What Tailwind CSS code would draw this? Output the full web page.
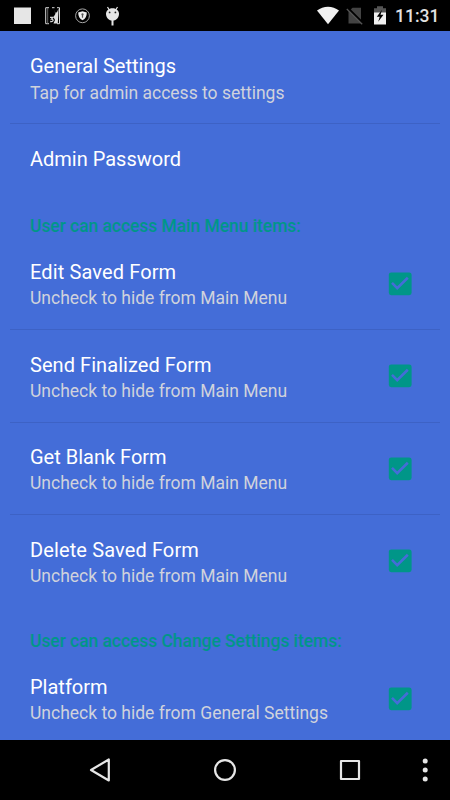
<!DOCTYPE html>
<html lang="en">
<head>
<meta charset="utf-8">
<title>Admin Settings</title>
<script src="https://cdn.jsdelivr.net/npm/@tailwindcss/browser@4"></script>
</head>
<body class="w-[450px] h-[800px] overflow-hidden bg-[#446dd8] font-[Roboto,sans-serif] text-white flex flex-col">
<svg class="hidden">
  <symbol id="check" viewBox="0 0 24 24">
    <rect x="0.8" y="0.4" width="22.8" height="22.8" rx="2.400" fill="#009688"/>
    <path d="M4 10.900L9.200 16.100L19.800 5.700" fill="none" stroke="#446dd8" stroke-width="2.600"/>
  </symbol>
</svg>
<header class="h-[31px] shrink-0 bg-black flex">
  <svg class="w-[390px] h-[31px]" viewBox="0 0 390 31">
    <rect x="14" y="7.500" width="17" height="16.500" fill="#e6e6e6"/>
    <g fill="none" stroke="#d8d8d8">
      <path d="M49 7.700h-3.300v16H49M52 7.700H54.500M57 7.700h2.500v16H57" stroke-width="1"/>
      <path d="M47.700 8v15.500" stroke="#666" stroke-width="1"/>
      <path d="M50 17.300h3L51.500 19.200C54 19.200 53.500 22.300 50.200 21.500" stroke-width="1.300"/>
    </g>
    <path d="M53.700 9L55 12.800L57 12.300L58.600 8.500L57.800 23.500H53.500L55 20L53.500 17L55.500 13.800Z" fill="#e0e0e0"/>
    <circle cx="82.500" cy="15.800" r="6.900" fill="none" stroke="#a5a5a5" stroke-width="1"/>
    <path d="M82.500 11.300L86.800 12.500C86.800 16.200 85.500 18.700 82.500 20.300C79.500 18.700 78.200 16.200 78.200 12.500Z" fill="#eee"/>
    <path d="M82.500 13.200a1.200 1.200 0 0 1 .6 2.200v2.300h-1.200v-2.300a1.200 1.200 0 0 1 .6-2.200" fill="#555"/>
    <path d="M107.500 7L109.300 10M117.500 7L115.700 10" stroke="#e6e6e6" stroke-width="1.200"/>
    <path d="M112.500 20V25.500" stroke="#e6e6e6" stroke-width="2"/>
    <path d="M112.500 8.200C116.500 8.200 119 10.700 119 14C119 17.500 116 20.700 112.500 20.700S106 17.500 106 14C106 10.700 108.500 8.200 112.500 8.200Z" fill="#e6e6e6"/>
    <circle cx="109.600" cy="12.400" r=".9" fill="#222"/><circle cx="115.400" cy="12.400" r=".9" fill="#222"/>
    <path d="M317 10.600C323.300 5.300 332.700 5.300 339 10.600L328 24.200Z" fill="#f0f0f0"/>
    <path d="M348.500 11.500L352.500 7.700H361V23.500H348.500Z" fill="#434343"/>
    <path d="M347.500 8L363 23.500" stroke="#000" stroke-width="2.500"/>
    <path d="M346.800 9L362.200 24.300" stroke="#555" stroke-width="1.300"/>
    <path d="M374 8.200H377V6.300H383V8.200H386V13H374Z" fill="#555"/>
    <path d="M374 12.500H386V24.500H374Z" fill="#f0f0f0"/>
    <path d="M382 9.800L376.800 16.800H379.700L378.200 21.800L383.500 14.800H380.500Z" fill="#000"/>
  </svg>
  <div class="pl-[5px] pt-[1px] text-[17.5px] leading-[31px] font-medium text-[#e2e2e2] whitespace-nowrap">11:31</div>
</header>
<main class="h-[709px] shrink-0 overflow-hidden">
  <section>
    <div class="h-[92px] pl-[30px] pt-[23px]">
      <h2 class="text-[20px] leading-6">General Settings</h2>
      <p class="text-[17.5px] leading-[21px] mt-[5px] text-[#d0d3dc]">Tap for admin access to settings</p>
    </div>
    <hr class="mx-2.5 border-0 h-px bg-[#3d62c5]">
    <div class="h-[70px] pl-[30px] pt-[23px]"><h2 class="text-[20px] leading-6">Admin Password</h2></div>
  </section>
  <section>
    <h3 class="h-[43px] pl-[30px] pt-[21px] text-[17.5px] leading-[22px] font-medium tracking-[-0.06px] text-[#009688]">User can access Main Menu items:</h3>
    <div class="h-[92px] pl-[30px] pr-[38px] flex justify-between">
      <div class="pt-[23px]"><h2 class="text-[20px] leading-6 tracking-[0.12px]">Edit Saved Form</h2><p class="text-[17.5px] leading-[21px] mt-1 text-[#d0d3dc]">Uncheck to hide from Main Menu</p></div>
      <svg class="w-6 h-6 mt-[35px]"><use href="#check"/></svg>
    </div>
    <hr class="mx-2.5 border-0 h-px bg-[#3d62c5]">
    <div class="h-[92px] pl-[30px] pr-[38px] flex justify-between">
      <div class="pt-[23px]"><h2 class="text-[20px] leading-6 tracking-[0.06px]">Send Finalized Form</h2><p class="text-[17.5px] leading-[21px] mt-1 text-[#d0d3dc]">Uncheck to hide from Main Menu</p></div>
      <svg class="w-6 h-6 mt-[34px]"><use href="#check"/></svg>
    </div>
    <hr class="mx-2.5 border-0 h-px bg-[#3d62c5]">
    <div class="h-[91px] pl-[30px] pr-[38px] flex justify-between">
      <div class="pt-[22px]"><h2 class="text-[20px] leading-6">Get Blank Form</h2><p class="text-[17.5px] leading-[21px] mt-1 text-[#d0d3dc]">Uncheck to hide from Main Menu</p></div>
      <svg class="w-6 h-6 mt-[34px]"><use href="#check"/></svg>
    </div>
    <hr class="mx-2.5 border-0 h-px bg-[#3d62c5]">
    <div class="h-[92px] pl-[30px] pr-[38px] flex justify-between">
      <div class="pt-[23px]"><h2 class="text-[20px] leading-6 tracking-[0.12px]">Delete Saved Form</h2><p class="text-[17.5px] leading-[21px] mt-1 text-[#d0d3dc]">Uncheck to hide from Main Menu</p></div>
      <svg class="w-6 h-6 mt-[34px]"><use href="#check"/></svg>
    </div>
  </section>
  <section>
    <h3 class="h-[45px] pl-[30px] pt-[23px] text-[17.5px] leading-[22px] font-medium tracking-[-0.06px] text-[#009688]">User can access Change Settings items:</h3>
    <div class="h-[92px] pl-[30px] pr-[38px] flex justify-between">
      <div class="pt-[23px]"><h2 class="text-[20px] leading-6">Platform</h2><p class="text-[17.5px] leading-[21px] mt-1 text-[#d0d3dc]">Uncheck to hide from General Settings</p></div>
      <svg class="w-6 h-6 mt-[35px]"><use href="#check"/></svg>
    </div>
  </section>
</main>
<nav class="h-[60px] shrink-0 bg-black">
  <svg class="w-[450px] h-[60px]" viewBox="0 0 450 60" fill="none" stroke="#e6e6e6" stroke-width="2.200" stroke-linejoin="round">
    <path d="M108.800 19.500V40.500L91 30Z"/>
    <circle cx="225" cy="30" r="9.900"/>
    <rect x="341" y="21" width="18" height="18"/>
    <g fill="#e6e6e6" stroke="none"><circle cx="425.200" cy="21" r="2.500"/><circle cx="425.200" cy="30" r="2.500"/><circle cx="425.200" cy="39" r="2.500"/></g>
  </svg>
</nav>
</body>
</html>
